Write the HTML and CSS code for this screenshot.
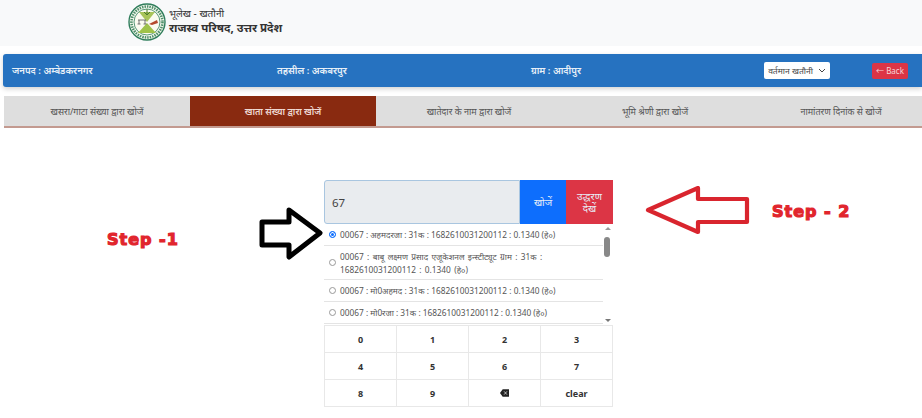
FILE: index.html
```html
<!DOCTYPE html>
<html lang="hi">
<head>
<meta charset="utf-8">
<title>भूलेख - खतौनी</title>
<link rel="stylesheet" href="styles.css">
</head>
<body>
<div class="page">
  <header class="brand">
    <svg class="logo" width="38" height="38" viewBox="0 0 38 38">
      <circle cx="19" cy="19" r="18" fill="#f4f8ee" stroke="#2f7d5b" stroke-width="1.4"/>
      <circle cx="19" cy="19" r="15.5" fill="none" stroke="#4f8f6a" stroke-width="2.6" stroke-dasharray="1.5 1"/>
      <circle cx="19" cy="19" r="13" fill="#fbfbf0" stroke="#2f7d5b" stroke-width=".8"/>
      <path d="M11 9h16l-8 10z" fill="#a9c45a"/>
      <path d="M19 20l9 10H10z" fill="#9fc24a"/>
      <path d="M21 21l8-4 1 3-6 2z" fill="#b5492c"/>
      <path d="M10 17h8M11 17v4M17 17v4M9.500 21h3M15.500 21h3" stroke="#555" stroke-width=".8" fill="none"/>
      <path d="M19 6v6M16 9l3 3 3-3" stroke="#4c7a2c" stroke-width="1" fill="none"/>
    </svg>
    <div class="brand-text">
      <div class="brand-sub">भूलेख - खतौनी</div>
      <div class="brand-main">राजस्व परिषद, उत्तर प्रदेश</div>
    </div>
  </header>

  <section class="infobar">
    <span class="info info-a">जनपद : अम्बेडकरनगर</span>
    <span class="info info-b">तहसील : अकबरपुर</span>
    <span class="info info-c">ग्राम : आदीपुर</span>
    <span class="select">वर्तमान खतौनी
      <svg width="8" height="5" viewBox="0 0 8 5"><path d="M1 1l3 3 3-3" fill="none" stroke="#444" stroke-width="1"/></svg>
    </span>
    <span class="back">← Back</span>
  </section>

  <nav class="tabs">
    <a class="tab">खसरा/गाटा संख्या द्वारा खोजें</a>
    <a class="tab active">खाता संख्या द्वारा खोजें</a>
    <a class="tab">खातेदार के नाम द्वारा खोजें</a>
    <a class="tab">भूमि श्रेणी द्वारा खोजें</a>
    <a class="tab">नामांतरण दिनांक से खोजें</a>
  </nav>

  <main class="finder">
    <div class="searchrow">
      <div class="field">67</div>
      <button class="btn btn-blue">खोजें</button>
      <button class="btn btn-red">उद्धरण देखें</button>
    </div>
    <div class="results">
      <ul class="list">
        <li class="item"><span class="radio on"></span><span>00067 : अहमदरजा : 31क : 1682610031200112 : 0.1340 (हे०)</span></li>
        <li class="item item-long"><span class="radio"></span><span>00067 : बाबू लक्ष्मण प्रसाद एजूकेशनल इन्स्टीट्यूट ग्राम : 31क : 1682610031200112 : 0.1340 (हे०)</span></li>
        <li class="item"><span class="radio"></span><span>00067 : मो0अहमद : 31क : 1682610031200112 : 0.1340 (हे०)</span></li>
        <li class="item"><span class="radio"></span><span>00067 : मो0रजा : 31क : 1682610031200112 : 0.1340 (हे०)</span></li>
      </ul>
      <div class="scroll">
        <span class="up"></span>
        <span class="thumb"></span>
        <span class="down"></span>
      </div>
    </div>
    <div class="keypad">
      <span class="key">0</span><span class="key">1</span><span class="key">2</span><span class="key">3</span>
      <span class="key">4</span><span class="key">5</span><span class="key">6</span><span class="key">7</span>
      <span class="key">8</span><span class="key">9</span>
      <span class="key"><svg width="9" height="8" viewBox="0 0 11 9"><path d="M3.300 0H11v9H3.300L0 4.500z" fill="#222"/><path d="M5 2.500l3.500 4M8.500 2.500L5 6.500" stroke="#ddd" stroke-width="1"/></svg></span>
      <span class="key">clear</span>
    </div>
  </main>

  <svg class="arrow arrow-black" width="66" height="54" viewBox="0 0 66 54">
    <path d="M3 15H30V3L61 26 30 50V38H3z" fill="#fff" stroke="#000" stroke-width="5" stroke-linejoin="round"/>
  </svg>
  <svg class="arrow arrow-red" width="108" height="50" viewBox="0 0 108 50">
    <path d="M4 24L54 2V13H103V36H54V46z" fill="#fff" stroke="#d9252e" stroke-width="4.200" stroke-linejoin="round"/>
  </svg>
  <span class="step step-1">Step -1</span>
  <span class="step step-2">Step - 2</span>
</div>
</body>
</html>
```
FILE: styles.css
```css
* { box-sizing: border-box; }
html, body { margin: 0; padding: 0; }
body {
  background: #fff;
  font-family: "Noto Sans", "Open Sans", "Noto Sans CJK SC", sans-serif;
  color: #333;
}
.page { position: relative; width: 922px; height: 418px; overflow: hidden; }

.brand {
  height: 46px;
  background: #f8f9fa;
  display: flex;
  align-items: center;
  gap: 3px;
  padding-left: 128px;
}
.logo { flex: none; margin-top: -2px; }
.brand-text { margin-top: -3px; }
.brand-sub { font-size: 10px; line-height: 13px; color: #333; }
.brand-main { font-size: 11.500px; line-height: 16px; font-weight: 700; color: #333; }

.infobar {
  margin: 8px 0 0 3px;
  height: 33px;
  background: #2672c0;
  border-radius: 3px 0 0 3px;
  box-shadow: 0 2px 5px rgba(0,0,0,.18);
  display: flex;
  align-items: center;
  color: #e8f0f8;
  font-size: 9.500px;
  font-weight: 600;
}
.info-a { margin-left: 9px; width: 265px; flex: none; }
.info-b { width: 254px; flex: none; }
.info-c { width: 233px; flex: none; }
.select {
  width: 66px;
  height: 17px;
  background: #fff;
  border-radius: 2px;
  color: #444;
  font-size: 8.500px;
  font-weight: 400;
  display: flex;
  align-items: center;
  justify-content: center;
  gap: 5px;
}
.back {
  margin-left: 42px;
  width: 36px;
  height: 16px;
  background: #dc3545;
  border-radius: 2px;
  color: #f6d5d8;
  font-size: 8px;
  font-weight: 400;
  display: flex;
  align-items: center;
  justify-content: center;
}

.tabs {
  margin: 9px 0 0 4px;
  height: 32px;
  display: flex;
  background: #dedede;
  border-bottom: 2px solid #c39a90;
  overflow: hidden;
}
.tab {
  flex: none;
  width: 186px;
  height: 31px;
  display: flex;
  align-items: center;
  justify-content: center;
  font-size: 9px;
  color: #555;
}
.tab.active { background: #892a10; color: #efd9d2; font-weight: 600; }

.finder { margin: 52px 0 0 324px; width: 289px; }
.searchrow { display: flex; height: 44px; }
.field {
  width: 196px;
  background: #e9ecef;
  border: 1px solid #a9c6e0;
  border-radius: 3px 0 0 3px;
  padding: 0 7px;
  display: flex;
  align-items: center;
  font-size: 11.500px;
  color: #444;
}
.btn {
  border: 0;
  margin: 0;
  padding: 0 6px;
  font-family: inherit;
  color: #e8eef8;
  font-size: 10px;
  line-height: 12px;
}
.btn-blue { width: 46px; background: #0d6efd; }
.btn-red { width: 47px; background: #dc3545; }

.results { display: flex; height: 101px; }
.list { list-style: none; margin: 0; padding: 0; width: 279px; overflow: hidden; }
.item {
  display: flex;
  align-items: center;
  gap: 4px;
  padding: 0 2px 0 5px;
  border-bottom: 1px solid #e4e4e4;
  min-height: 22px;
  font-size: 8.300px;
  line-height: 13px;
  color: #555;
}
.item-long { min-height: 34px; word-spacing: 1.200px; }
.radio {
  flex: none;
  width: 7px;
  height: 7px;
  border-radius: 50%;
  border: 1px solid #999;
  background: #fff;
}
.radio.on { background: #0d6efd; border: 1px solid #0d6efd; box-shadow: inset 0 0 0 1px #fff; }
.scroll {
  width: 10px;
  display: flex;
  flex-direction: column;
  align-items: center;
  justify-content: space-between;
  position: relative;
  padding: 3px 0;
}
.up { width: 0; height: 0; border: 3px solid transparent; border-top: 0; border-bottom: 3px solid #999; }
.down { width: 0; height: 0; border: 3px solid transparent; border-bottom: 0; border-top: 3px solid #777; }
.thumb { position: absolute; top: 13px; left: 1px; width: 6px; height: 20px; background: #888; border-radius: 3px; }

.keypad {
  display: grid;
  grid-template-columns: repeat(4, 72px);
  grid-auto-rows: 27px;
  width: 289px;
  border-top: 1px solid #e8e8e8;
  border-left: 1px solid #e8e8e8;
}
.key {
  display: flex;
  align-items: center;
  justify-content: center;
  border-right: 1px solid #e8e8e8;
  border-bottom: 1px solid #e8e8e8;
  font-size: 9px;
  font-weight: 700;
  color: #333;
}

.arrow { position: absolute; }
.arrow-black { left: 259px; top: 207px; }
.arrow-red { left: 644px; top: 186px; }
.step {
  position: absolute;
  font-family: "DejaVu Sans", sans-serif;
  font-weight: 700;
  font-size: 16px;
  line-height: 16px;
  color: #e1252d;
  -webkit-text-stroke: 1.200px #e1252d;
  letter-spacing: 1px;
  white-space: nowrap;
}
.step-1 { left: 107px; top: 232px; }
.step-2 { left: 772px; top: 204px; }
```
